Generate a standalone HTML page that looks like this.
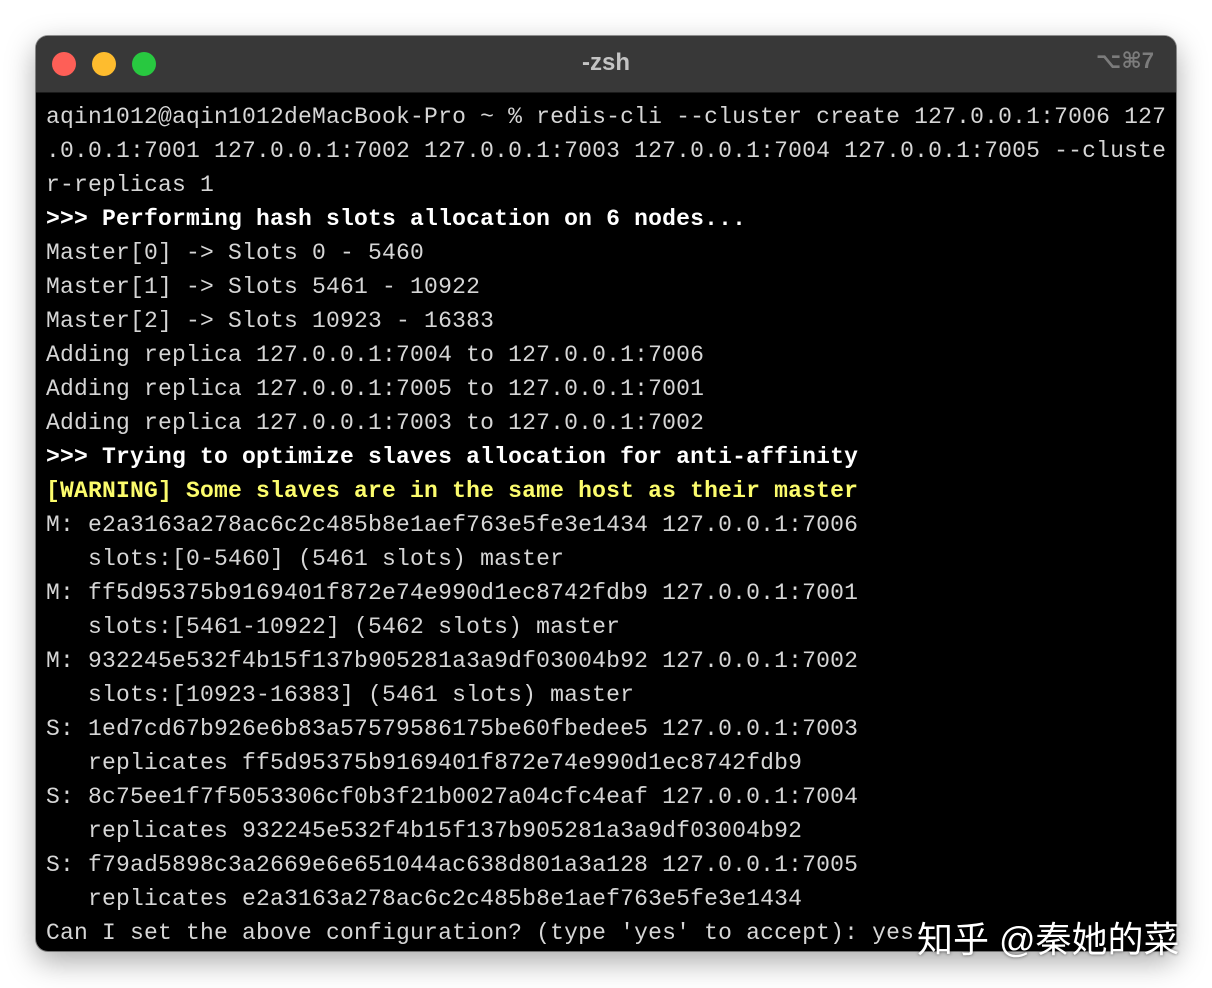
<!DOCTYPE html>
<html><head><meta charset="utf-8"><style>
html,body{margin:0;padding:0;background:#fff;width:1212px;height:988px;overflow:hidden;position:relative}
.win{position:absolute;left:36px;top:36px;width:1140px;height:915px;border-radius:12px;background:#000;overflow:hidden;box-shadow:0 10px 30px rgba(0,0,0,.35),0 0 0 1px rgba(0,0,0,.4)}
.tb{position:absolute;left:0;top:0;width:100%;height:56px;background:#383838;border-bottom:1px solid #1a1a1a}
.dot{position:absolute;top:16px;width:24px;height:24px;border-radius:50%}
.title{position:absolute;left:0;right:0;top:13px;text-align:center;font:bold 24px "Liberation Sans",sans-serif;color:#c4c4c4}
.kb{position:absolute;right:22px;top:12px;font:bold 22px "Liberation Sans","DejaVu Sans",sans-serif;color:#7c7c7c}
pre{position:absolute;left:10px;top:64px;margin:0;font:23px/34px "Liberation Mono",monospace;letter-spacing:0.2px;color:#d6d6d6;white-space:pre}
b{color:#fff}
.y{color:#fcfc6c;font-weight:bold}
.wm{position:absolute;left:917px;top:911px;font:36px "Liberation Sans","Noto Sans CJK SC",sans-serif;color:#fff;text-shadow:0 0 3px rgba(0,0,0,.6)}
</style></head><body>
<div class="win">
<div class="tb">
<div class="dot" style="left:16px;background:#fe5f57"></div>
<div class="dot" style="left:56px;background:#febc2e"></div>
<div class="dot" style="left:96px;background:#28c840"></div>
<div class="title">-zsh</div>
<div class="kb">⌥⌘7</div>
</div>
<pre>aqin1012@aqin1012deMacBook-Pro ~ % redis-cli --cluster create 127.0.0.1:7006 127
.0.0.1:7001 127.0.0.1:7002 127.0.0.1:7003 127.0.0.1:7004 127.0.0.1:7005 --cluste
r-replicas 1
<b>&gt;&gt;&gt; Performing hash slots allocation on 6 nodes...</b>
Master[0] -&gt; Slots 0 - 5460
Master[1] -&gt; Slots 5461 - 10922
Master[2] -&gt; Slots 10923 - 16383
Adding replica 127.0.0.1:7004 to 127.0.0.1:7006
Adding replica 127.0.0.1:7005 to 127.0.0.1:7001
Adding replica 127.0.0.1:7003 to 127.0.0.1:7002
<b>&gt;&gt;&gt; Trying to optimize slaves allocation for anti-affinity</b>
<span class="y">[WARNING] Some slaves are in the same host as their master</span>
M: e2a3163a278ac6c2c485b8e1aef763e5fe3e1434 127.0.0.1:7006
   slots:[0-5460] (5461 slots) master
M: ff5d95375b9169401f872e74e990d1ec8742fdb9 127.0.0.1:7001
   slots:[5461-10922] (5462 slots) master
M: 932245e532f4b15f137b905281a3a9df03004b92 127.0.0.1:7002
   slots:[10923-16383] (5461 slots) master
S: 1ed7cd67b926e6b83a57579586175be60fbedee5 127.0.0.1:7003
   replicates ff5d95375b9169401f872e74e990d1ec8742fdb9
S: 8c75ee1f7f5053306cf0b3f21b0027a04cfc4eaf 127.0.0.1:7004
   replicates 932245e532f4b15f137b905281a3a9df03004b92
S: f79ad5898c3a2669e6e651044ac638d801a3a128 127.0.0.1:7005
   replicates e2a3163a278ac6c2c485b8e1aef763e5fe3e1434
Can I set the above configuration? (type 'yes' to accept): yes</pre>
</div>
<div class="wm">知乎 @秦她的菜</div>
</body></html>
